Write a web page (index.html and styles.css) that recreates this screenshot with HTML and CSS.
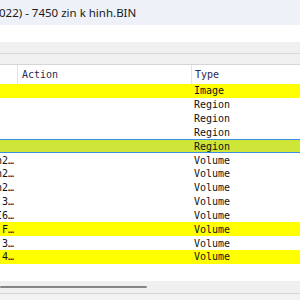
FILE: index.html
```html
<!DOCTYPE html>
<html>
<head>
  <title>7450 zin k hinh.BIN</title>
  <link rel="stylesheet" href="styles.css">
</head>
<body>
  <div class="window">
    <div class="titlebar">
      <span class="title">022) - 7450 zin k hinh.BIN</span>
    </div>
    <div class="menubar"></div>
    <div class="toolbar"></div>
    <div class="pathbar"></div>

    <div class="list">
      <div class="list-head">
        <div class="col name"></div>
        <div class="col action">Action</div>
        <div class="col type">Type</div>
      </div>

      <div class="row mark">
        <div class="cell name"></div><div class="cell"></div><div class="cell type">Image</div>
      </div>
      <div class="row">
        <div class="cell name"></div><div class="cell"></div><div class="cell type">Region</div>
      </div>
      <div class="row">
        <div class="cell name"></div><div class="cell"></div><div class="cell type">Region</div>
      </div>
      <div class="row">
        <div class="cell name"></div><div class="cell"></div><div class="cell type">Region</div>
      </div>
      <div class="row selected">
        <div class="cell name"></div><div class="cell"></div><div class="cell type">Region</div>
      </div>
      <div class="row">
        <div class="cell name"><span>Volume_h2…</span></div><div class="cell"></div><div class="cell type">Volume</div>
      </div>
      <div class="row">
        <div class="cell name"><span>Volume_h2…</span></div><div class="cell"></div><div class="cell type">Volume</div>
      </div>
      <div class="row">
        <div class="cell name"><span>Volume_h2…</span></div><div class="cell"></div><div class="cell type">Volume</div>
      </div>
      <div class="row">
        <div class="cell name"><span>Volume_.3…</span></div><div class="cell"></div><div class="cell type">Volume</div>
      </div>
      <div class="row">
        <div class="cell name"><span>Volume_I6…</span></div><div class="cell"></div><div class="cell type">Volume</div>
      </div>
      <div class="row mark">
        <div class="cell name"><span>Volume_:F…</span></div><div class="cell"></div><div class="cell type">Volume</div>
      </div>
      <div class="row">
        <div class="cell name"><span>Volume_'3…</span></div><div class="cell"></div><div class="cell type">Volume</div>
      </div>
      <div class="row mark">
        <div class="cell name"><span>Volume_'4…</span></div><div class="cell"></div><div class="cell type">Volume</div>
      </div>
    </div>

    <div class="hscroll"><div class="thumb"></div></div>
    <div class="statusbar"></div>
  </div>
</body>
</html>
```

FILE: styles.css
```css
body {
  margin: 0;
  width: 300px;
  height: 300px;
  overflow: hidden;
  background: #fff;
}

.window {
  display: flex;
  flex-direction: column;
  height: 300px;
}

.titlebar {
  height: 25px;
  background: #eef2f8;
  display: flex;
  align-items: center;
}

.title {
  font-family: "Noto Sans", sans-serif;
  font-size: 11.5px;
  color: #1b1b1b;
  margin-left: -1px;
  white-space: nowrap;
}

.menubar {
  height: 17px;
  background: #fff;
}

.toolbar {
  height: 11px;
  background: #f0f0f0;
  border-bottom: 1px solid #d9d9d9;
}

.pathbar {
  height: 10px;
  background: #f0f0f0;
  border-bottom: 1px solid #d5d5d5;
}

.list {
  flex: 1;
  background: #fff;
  font-family: "DejaVu Sans Mono", monospace;
  font-size: 10px;
  color: #111;
  overflow: hidden;
}

.list-head,
.row {
  display: grid;
  grid-template-columns: 18px 174px 1fr;
}

.list-head {
  height: 19px;
  color: #2e2a55;
}

.col {
  display: flex;
  align-items: center;
  border-right: 1px solid #e3e3e3;
  padding-left: 3px;
}

.col.action {
  padding-left: 4px;
}

.col.type {
  border-right: none;
}

.row {
  height: 13.83px;
}

.cell {
  display: flex;
  align-items: center;
  padding-left: 2px;
  white-space: nowrap;
  overflow: hidden;
}

.cell.name {
  justify-content: flex-end;
  padding-left: 0;
  padding-right: 4px;
}

.cell.type {
  padding-left: 2px;
}

.row.mark {
  background: #ffff00;
}

.row.selected {
  background: #cde637;
  box-shadow: inset 0 1px #3a8ee0, inset 0 -1px #3a8ee0;
}

.hscroll {
  height: 12px;
  background: #f0f0f0;
  display: flex;
  align-items: center;
}

.thumb {
  width: 147px;
  height: 2px;
  background: #858585;
  border-radius: 1px;
}

.statusbar {
  height: 6px;
  background: #f3f3f3;
  border-top: 1px solid #d6d6d6;
}
```
